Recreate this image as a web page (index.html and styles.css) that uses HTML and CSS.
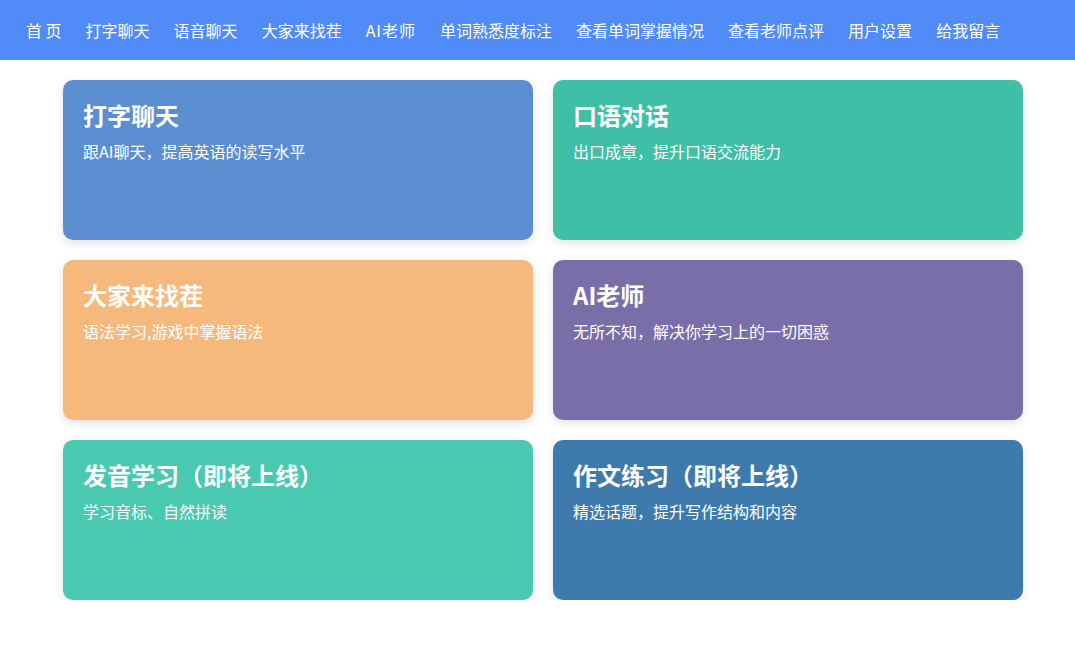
FILE: index.html
```html
<!DOCTYPE html>
<html lang="zh-CN">
<head>
<meta charset="utf-8">
<title>首页</title>
<link rel="stylesheet" href="styles.css">
</head>
<body>
<nav class="nav">
  <a class="nav-item">首 页</a>
  <a class="nav-item">打字聊天</a>
  <a class="nav-item">语音聊天</a>
  <a class="nav-item">大家来找茬</a>
  <a class="nav-item nav-wide">AI老师</a>
  <a class="nav-item">单词熟悉度标注</a>
  <a class="nav-item">查看单词掌握情况</a>
  <a class="nav-item">查看老师点评</a>
  <a class="nav-item">用户设置</a>
  <a class="nav-item">给我留言</a>
</nav>
<main class="grid">
  <div class="card c1"><h3 class="card-title">打字聊天</h3><p class="card-desc">跟AI聊天，提高英语的读写水平</p></div>
  <div class="card c2"><h3 class="card-title">口语对话</h3><p class="card-desc">出口成章，提升口语交流能力</p></div>
  <div class="card c3"><h3 class="card-title">大家来找茬</h3><p class="card-desc">语法学习,游戏中掌握语法</p></div>
  <div class="card c4"><h3 class="card-title">AI老师</h3><p class="card-desc">无所不知，解决你学习上的一切困惑</p></div>
  <div class="card c5"><h3 class="card-title">发音学习（即将上线）</h3><p class="card-desc">学习音标、自然拼读</p></div>
  <div class="card c6"><h3 class="card-title">作文练习（即将上线）</h3><p class="card-desc">精选话题，提升写作结构和内容</p></div>
</main>
</body>
</html>
```
FILE: styles.css
```css
* { box-sizing: border-box; }
html, body {
  margin: 0;
  padding: 0;
  background: #ffffff;
  font-family: "Noto Sans CJK SC", "Noto Sans", sans-serif;
}
.nav {
  height: 60px;
  background: #508bf8;
  display: flex;
  align-items: center;
  padding: 0 0 0 14px;
}
.nav-item {
  color: #ffffff;
  font-size: 16px;
  line-height: 24px;
  padding: 0 12px;
  white-space: nowrap;
  cursor: pointer;
}
.nav-wide {
  letter-spacing: 1px;
}
.grid {
  width: 960px;
  margin: 20px 0 0 63px;
  display: grid;
  grid-template-columns: 470px 470px;
  grid-auto-rows: 160px;
  gap: 20px;
}
.card {
  border-radius: 10px;
  padding: 20px;
  color: #ffffff;
  box-shadow: 0 3px 10px rgba(0, 0, 0, 0.12);
}
.card-title {
  margin: 0;
  font-size: 24px;
  line-height: 30px;
  font-weight: 700;
}
.card-desc {
  margin: 9px 0 0;
  font-size: 16px;
  line-height: 24px;
}
.c1 { background: #5b8ed1; }
.c2 { background: #3fbfa6; }
.c3 { background: #f5b97e; }
.c4 { background: #7a6ea8; }
.c5 { background: #48c9b0; }
.c6 { background: #3e7aab; }
```
